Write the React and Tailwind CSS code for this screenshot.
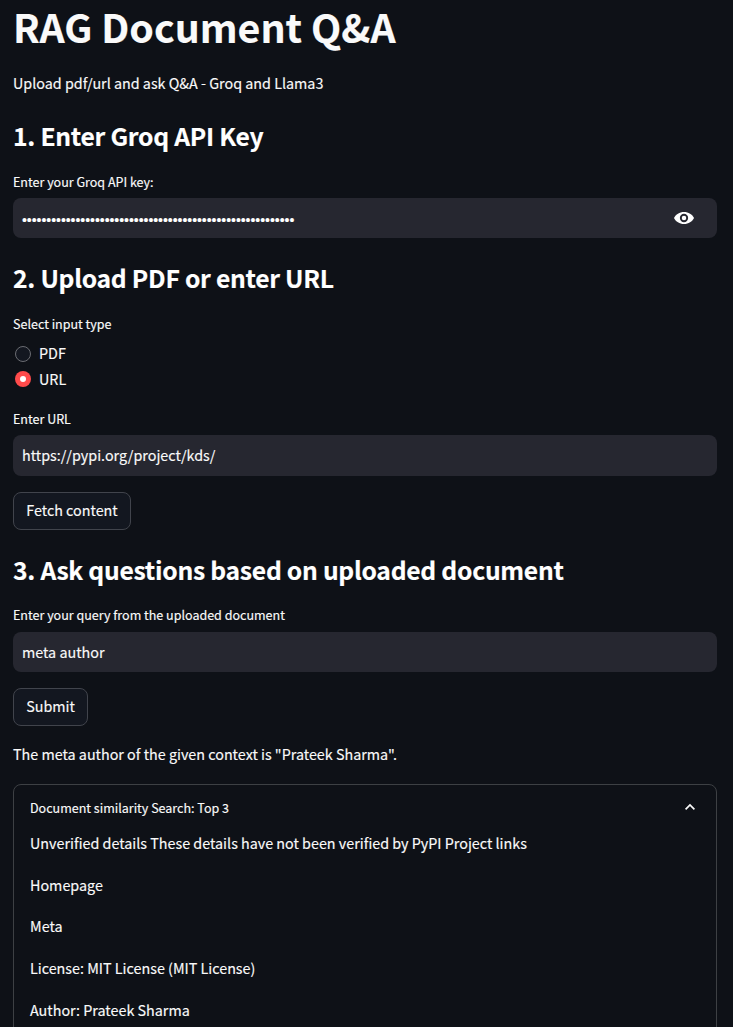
const API_KEY_LENGTH = 56;

const details = [
  "Unverified details These details have not been verified by PyPI Project links",
  "Homepage",
  "Meta",
  "License: MIT License (MIT License)",
  "Author: Prateek Sharma",
];

function Heading({ children, className = "" }) {
  return (
    <h2 className={`h-[34px] shrink-0 whitespace-nowrap text-[24.7px] font-semibold leading-[31px] tracking-[-0.27px] text-white ${className}`}>
      {children}
    </h2>
  );
}

function Label({ children, className = "" }) {
  return (
    <div className={`h-5 shrink-0 whitespace-nowrap text-[12.53px] leading-5 ${className}`}>{children}</div>
  );
}

function Field({ children, className = "" }) {
  return (
    <div className={`flex shrink-0 items-center justify-between rounded-lg bg-[#262730] pl-[9px] pr-[23px] ${className}`}>
      {children}
    </div>
  );
}

function Button({ children, className = "" }) {
  return (
    <button className={`flex h-[38px] shrink-0 items-center justify-center self-start whitespace-nowrap rounded-lg border border-[#41444c] bg-[#131720] pb-0.5 ${className}`}>
      {children}
    </button>
  );
}

function Radio({ label, checked }) {
  return (
    <label className="flex items-start gap-2 pl-0.5">
      {checked ? (
        <span className="mt-1 flex size-4 items-center justify-center rounded-full bg-[#ff4b4b]">
          <span className="size-1.5 rounded-full bg-white" />
        </span>
      ) : (
        <span className="mt-[5px] size-4 rounded-full border border-[#6a6c72] bg-[#131720]" />
      )}
      <span className="h-[26px] leading-6">{label}</span>
    </label>
  );
}

export default function App() {
  return (
    <main className="flex h-[1027px] w-full flex-col overflow-hidden bg-[#0e1117] pl-[13px] pr-4 font-['Noto_Sans_CJK_SC',sans-serif] text-[14.33px] leading-[26px] text-[#fafafa] [-webkit-text-stroke:0.15px]">
      <h1 className="h-[58px] shrink-0 whitespace-nowrap text-[39.3px] font-bold leading-[51px]">RAG Document Q&amp;A</h1>
      <p className="mt-3 h-[27px] shrink-0">Upload pdf/url and ask Q&amp;A - Groq and Llama3</p>

      <Heading className="mt-[23px]">1. Enter Groq API Key</Heading>
      <Label className="mt-[18px]">Enter your Groq API key:</Label>
      <Field className="mt-1.5 h-10">
        <span className="pt-1 font-['Liberation_Sans',sans-serif] text-[14px] tracking-[-0.04px] text-white">{"•".repeat(API_KEY_LENGTH)}</span>
        <svg className="h-3 w-5" viewBox="0 0 20 12">
          <path d="M10 0C5.500 0 1.700 2.500 0 6c1.700 3.500 5.500 6 10 6s8.300-2.500 10-6c-1.700-3.500-5.500-6-10-6z" fill="white" />
          <circle cx="10" cy="6" r="3.2" fill="white" stroke="#262730" strokeWidth="1.9" />
        </svg>
      </Field>

      <Heading className="mt-6">2. Upload PDF or enter URL</Heading>
      <Label className="mt-[18px]">Select input type</Label>
      <div className="mt-[7px] h-[52px] shrink-0">
        <Radio label="PDF" />
        <Radio label="URL" checked />
      </div>
      <Label className="mt-4">Enter URL</Label>
      <Field className="mt-1.5 h-[41px] pb-px">https://pypi.org/project/kds/</Field>
      <Button className="mt-4 w-[118px]">Fetch content</Button>

      <Heading className="mt-6">3. Ask questions based on uploaded document</Heading>
      <Label className="mt-[17px]">Enter your query from the uploaded document</Label>
      <Field className="mt-[7px] h-10">meta author</Field>
      <Button className="mt-4 w-[75px]">Submit</Button>
      <p className="mt-[15px] h-[27px] shrink-0">The meta author of the given context is "Prateek Sharma".</p>

      <section className="mt-4 h-[300px] shrink-0 rounded-lg border border-[#3d4044] px-4 pt-[13px]">
        <div className="flex items-center justify-between pr-1">
          <Label>Document similarity Search: Top 3</Label>
          <svg className="mb-0.5 h-2 w-3" viewBox="0 0 12 8" fill="none" stroke="currentColor" strokeWidth="1.7">
            <path d="M1.600 6.400 6 2l4.400 4.400" />
          </svg>
        </div>
        <div className="mt-3 flex flex-col gap-[15.7px]">
          {details.map((line) => (
            <p key={line} className="h-[26px] whitespace-nowrap">{line}</p>
          ))}
        </div>
      </section>
    </main>
  );
}
